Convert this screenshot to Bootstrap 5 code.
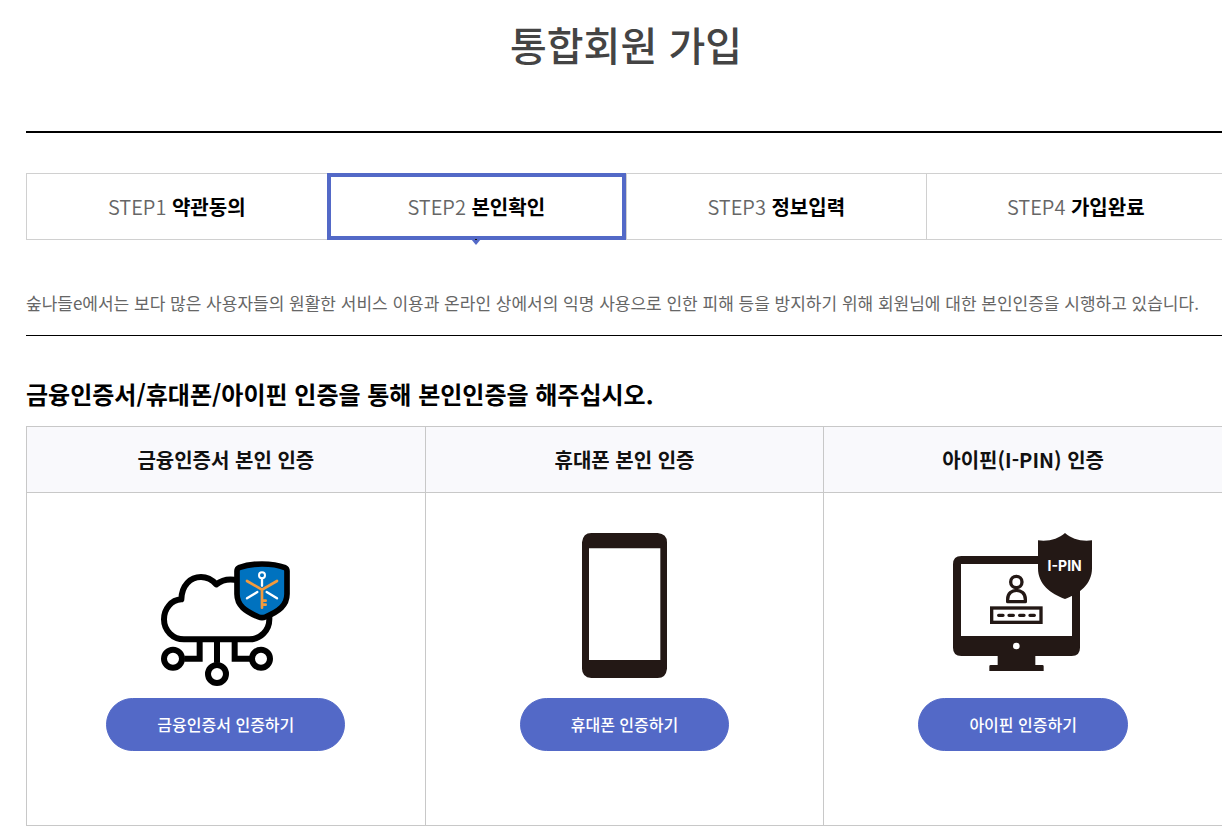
<!DOCTYPE html>
<html lang="ko">
<head>
<meta charset="utf-8">
<meta name="viewport" content="width=device-width, initial-scale=1">
<title>통합회원 가입</title>
<link href="https://cdn.jsdelivr.net/npm/bootstrap@5.3.0/dist/css/bootstrap.min.css" rel="stylesheet">
<style>
body{font-family:"Noto Sans CJK KR",sans-serif;color:#000;background:#fff;overflow-x:hidden}
.join-page{margin-right:-4px;padding:14px 0 12px 26px}
.join-title{font-size:40px;line-height:60px;font-weight:500;color:#444;padding-bottom:57px;border-bottom:2px solid #000;margin-bottom:40px}
.steps{border:1px solid #d0d0d0;height:67px;font-size:20px;line-height:30px;color:#666}
.step{font-weight:350;border-left:1px solid #d0d0d0}
.step:first-child{border-left:0}
.step strong{color:#000;font-weight:700}
.step.current{border:4px solid #5369c7;margin:-1px 0}
.step-arrow{top:100%;margin-top:1px}
.intro{font-size:17px;line-height:26px;color:#666;font-weight:400;padding-bottom:19px;border-bottom:1px solid #000;margin:50px 0 40px}
.guide{font-size:24px;line-height:36px;font-weight:700;margin-bottom:14px}
.auth-table{table-layout:fixed;width:calc(100% - 3px);border:1px solid #c8c8c8}
.auth-table th,.auth-table td{border:1px solid #c8c8c8}
.auth-table th{background:#f9f9fc;font-size:20px;line-height:30px;font-weight:700;padding:18px 0 17px;color:#111}
.auth-table td{padding:40px 0 74px}
.auth-icon{width:150px;height:145px;margin-bottom:20px;overflow:visible}
.btn-auth{--bs-btn-color:#fff;--bs-btn-bg:#5369c7;--bs-btn-border-color:#5369c7;--bs-btn-hover-color:#fff;--bs-btn-hover-bg:#4359b7;--bs-btn-hover-border-color:#4359b7;--bs-btn-padding-x:50px;font-size:16px;line-height:24px;font-weight:500;padding-top:13px;padding-bottom:14px}
</style>
</head>
<body>
<main class="join-page">
  <h1 class="join-title text-center">통합회원 가입</h1>

  <ol class="steps list-unstyled d-flex mb-0 text-center">
    <li class="step flex-fill w-25 d-flex align-items-center justify-content-center"><span>STEP1 <strong>약관동의</strong></span></li>
    <li class="step current flex-fill w-25 d-flex align-items-center justify-content-center position-relative" aria-current="step"><span>STEP2 <strong>본인확인</strong></span>
      <svg class="step-arrow position-absolute" width="14" height="9" viewBox="0 0 14 9" aria-hidden="true"><path d="M2 2h10L7 8z" fill="#5369c7"/><path d="M6 2h2v1H6z" fill="#111"/></svg>
    </li>
    <li class="step flex-fill w-25 d-flex align-items-center justify-content-center"><span>STEP3 <strong>정보입력</strong></span></li>
    <li class="step flex-fill w-25 d-flex align-items-center justify-content-center"><span>STEP4 <strong>가입완료</strong></span></li>
  </ol>

  <p class="intro text-nowrap">숲나들e에서는 보다 많은 사용자들의 원활한 서비스 이용과 온라인 상에서의 익명 사용으로 인한 피해 등을 방지하기 위해 회원님에 대한 본인인증을 시행하고 있습니다.</p>

  <h2 class="guide">금융인증서/휴대폰/아이핀 인증을 통해 본인인증을 해주십시오.</h2>
  <table class="auth-table text-center">
    <thead>
      <tr><th scope="col">금융인증서 본인 인증</th><th scope="col">휴대폰 본인 인증</th><th scope="col">아이핀(I-PIN) 인증</th></tr>
    </thead>
    <tbody>
      <tr>
        <td>
          <svg class="auth-icon d-block mx-auto" viewBox="0 -51 450 435" fill="none" stroke="#000" stroke-width="18" aria-hidden="true">
            <path d="M262 91c-26-6-48-3-66 12-14-15-28-22-46-22-32 0-58 25-59 67-30 2-52 28-52 60 0 34 27 60 60 60h196c34 0 60-27 60-60v-14" stroke-linejoin="round"/>
            <path d="M146 268v58h-46M198 268v70M251 268v58h46"/>
            <circle cx="66" cy="326" r="27"/><circle cx="198" cy="372" r="27"/><circle cx="330" cy="326" r="27"/>
            <path d="M333 42c28 0 51 4 69 11 4 2 6 5 6 10v69c0 34-24 52-65 69-7 3-13 3-20 0-41-17-65-35-65-69V63c0-5 2-8 6-10 18-7 41-11 69-11z" fill="#0072bf" stroke-width="17"/>
            <g stroke="#fff" stroke-width="7" stroke-linecap="round"><circle cx="333" cy="76" r="9" stroke-width="6"/><path d="M333 86v21M288 145l31-19M378 145l-31-19"/></g>
            <path d="M288 93l45 26 45-26M333 119v54M333 152h11M333 164h11" stroke="#f39a3c" stroke-width="8" stroke-linecap="round"/>
          </svg>
          <button type="button" class="btn btn-auth rounded-pill">금융인증서 인증하기</button>
        </td>
        <td>
          <svg class="auth-icon d-block mx-auto" viewBox="-63 24 450 435" aria-hidden="true">
            <path fill="#231815" fill-rule="evenodd" d="M64 24h199q28 3 28 28v379q-3 28-28 28H64q-28-3-28-28V52q3-28 28-28zM57 70v335h214V70z"/>
          </svg>
          <button type="button" class="btn btn-auth rounded-pill">휴대폰 인증하기</button>
        </td>
        <td>
          <svg class="auth-icon d-block mx-auto" viewBox="12 24 450 435" fill="#231815" aria-hidden="true">
            <path fill-rule="evenodd" d="M52 93h331q25 0 25 25v250q0 25-25 25H274v27h21q4 0 4 4v14H136v-14q0-4 4-4h21v-27H52q-25 0-25-25V118q0-25 25-25zM51 117v216h333V117z"/>
            <circle cx="217" cy="363" r="10" fill="#fff"/>
            <g fill="none" stroke="#231815" stroke-width="10"><circle cx="217" cy="171" r="17"/><path d="M191 230v-7c0-36 53-36 53 0v7z" stroke-linejoin="round"/><rect x="143" y="249" width="148" height="43"/><path d="M164 271h13M195 271h13M227 271h13M258 271h13" stroke-linecap="round"/></g>
            <path d="M363 24c20 18 48 26 81 22v84c0 48-38 77-81 92-43-15-81-44-81-92V46c33 4 61-4 81-22z"/>
            <text x="362" y="138" text-anchor="middle" font-family="Inter, sans-serif" font-size="42" font-weight="700" fill="#fff">I-PIN</text>
          </svg>
          <button type="button" class="btn btn-auth rounded-pill">아이핀 인증하기</button>
        </td>
      </tr>
    </tbody>
  </table>
</main>
<script src="https://cdn.jsdelivr.net/npm/bootstrap@5.3.0/dist/js/bootstrap.bundle.min.js"></script>
</body>
</html>
